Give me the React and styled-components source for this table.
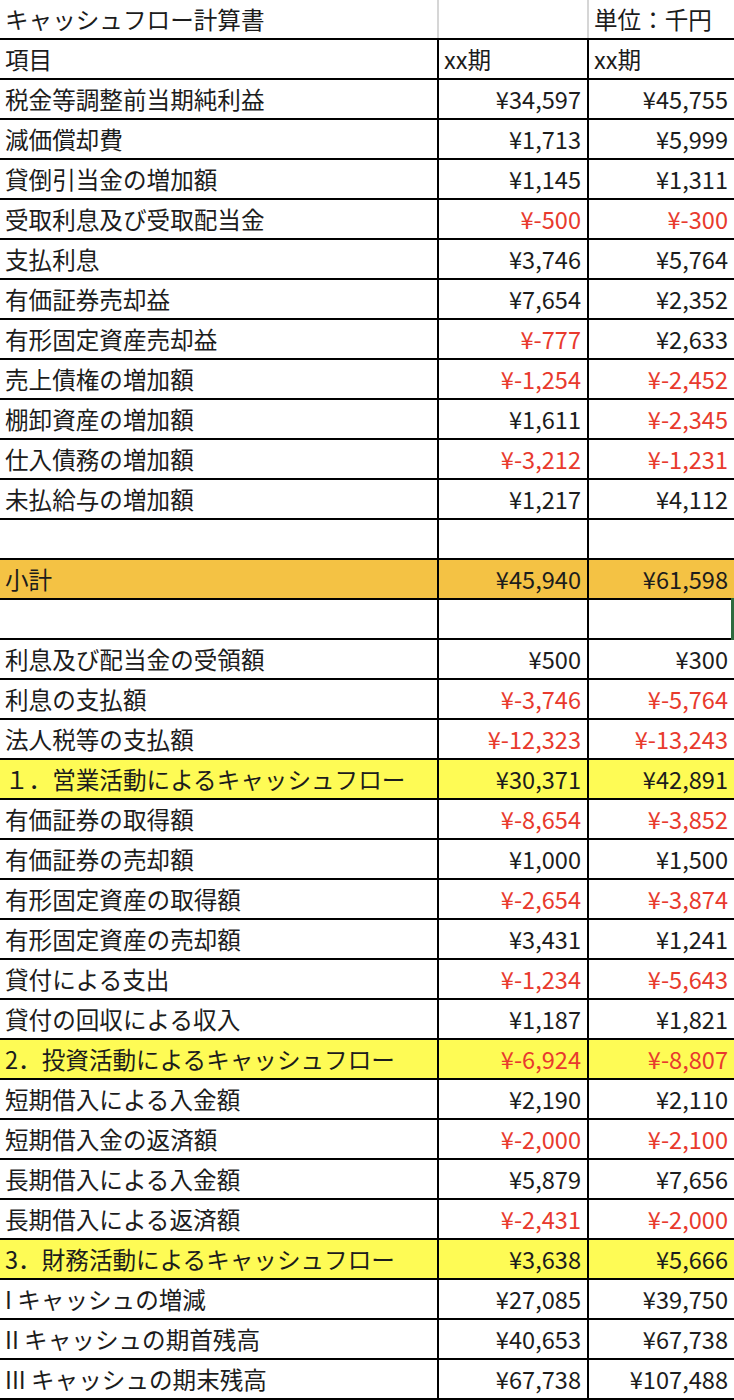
import styled, { createGlobalStyle } from 'styled-components';

const GlobalStyle = createGlobalStyle`
  body {
    margin: 0;
    background: #fff;
    font-family: "Noto Sans CJK JP", "Noto Sans", sans-serif;
    color: #1c1c1c;
  }
`;

const Sheet = styled.div`
  width: 734px;
  overflow: hidden;
`;

const Row = styled.div`
  position: relative;
  display: grid;
  grid-template-columns: 437px 150px 147px;
  height: 40px;
  box-sizing: border-box;
  border-bottom: 2px solid #000;
  background: ${props => props.fill || '#fff'};
  ${props => props.plain && 'border-bottom-color: #000;'}
`;

const Cell = styled.div`
  display: flex;
  align-items: center;
  justify-content: ${props => (props.num ? 'flex-end' : 'flex-start')};
  padding: ${props => (props.num ? '0 6px 0 0' : '0 0 0 5px')};
  box-sizing: border-box;
  border-left: ${props => (props.first ? 'none' : `2px solid ${props.soft ? '#d6d6d6' : '#000'}`)};
  font-size: 23.6px;
  line-height: 1;
  white-space: nowrap;
  color: ${props => (props.neg ? '#e83a2d' : '#1c1c1c')};
  padding-top: 1px;
`;

const Selection = styled.span`
  position: absolute;
  right: 0;
  top: -2px;
  width: 3px;
  height: 44px;
  background: #2f6b3f;
`;

const ORANGE = '#f4c244';
const YELLOW = '#fefb55';

const rows = [
  ['税金等調整前当期純利益', '¥34,597', '¥45,755'],
  ['減価償却費', '¥1,713', '¥5,999'],
  ['貸倒引当金の増加額', '¥1,145', '¥1,311'],
  ['受取利息及び受取配当金', '¥-500', '¥-300'],
  ['支払利息', '¥3,746', '¥5,764'],
  ['有価証券売却益', '¥7,654', '¥2,352'],
  ['有形固定資産売却益', '¥-777', '¥2,633'],
  ['売上債権の増加額', '¥-1,254', '¥-2,452'],
  ['棚卸資産の増加額', '¥1,611', '¥-2,345'],
  ['仕入債務の増加額', '¥-3,212', '¥-1,231'],
  ['未払給与の増加額', '¥1,217', '¥4,112'],
  ['', '', ''],
  ['小計', '¥45,940', '¥61,598', ORANGE],
  ['', '', '', null, true],
  ['利息及び配当金の受領額', '¥500', '¥300'],
  ['利息の支払額', '¥-3,746', '¥-5,764'],
  ['法人税等の支払額', '¥-12,323', '¥-13,243'],
  ['１．営業活動によるキャッシュフロー', '¥30,371', '¥42,891', YELLOW],
  ['有価証券の取得額', '¥-8,654', '¥-3,852'],
  ['有価証券の売却額', '¥1,000', '¥1,500'],
  ['有形固定資産の取得額', '¥-2,654', '¥-3,874'],
  ['有形固定資産の売却額', '¥3,431', '¥1,241'],
  ['貸付による支出', '¥-1,234', '¥-5,643'],
  ['貸付の回収による収入', '¥1,187', '¥1,821'],
  ['2．投資活動によるキャッシュフロー', '¥-6,924', '¥-8,807', YELLOW],
  ['短期借入による入金額', '¥2,190', '¥2,110'],
  ['短期借入金の返済額', '¥-2,000', '¥-2,100'],
  ['長期借入による入金額', '¥5,879', '¥7,656'],
  ['長期借入による返済額', '¥-2,431', '¥-2,000'],
  ['3．財務活動によるキャッシュフロー', '¥3,638', '¥5,666', YELLOW],
  ['I キャッシュの増減', '¥27,085', '¥39,750'],
  ['II キャッシュの期首残高', '¥40,653', '¥67,738'],
  ['III キャッシュの期末残高', '¥67,738', '¥107,488'],
];

const isNeg = v => v.startsWith('¥-');

export default function App() {
  return (
    <>
      <GlobalStyle />
      <Sheet>
        <Row>
          <Cell first>キャッシュフロー計算書</Cell>
          <Cell soft />
          <Cell soft>単位：千円</Cell>
        </Row>
        <Row>
          <Cell first>項目</Cell>
          <Cell>xx期</Cell>
          <Cell>xx期</Cell>
        </Row>
        {rows.map(([label, a, b, fill, selected], i) => (
          <Row key={i} fill={fill}>
            <Cell first>{label}</Cell>
            <Cell num neg={isNeg(a)}>{a}</Cell>
            <Cell num neg={isNeg(b)}>{b}</Cell>
            {selected && <Selection />}
          </Row>
        ))}
      </Sheet>
    </>
  );
}
